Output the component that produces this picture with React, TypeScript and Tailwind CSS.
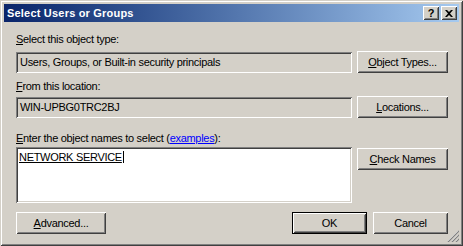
import type { ReactNode } from 'react'

const raised =
  'shadow-[inset_1px_1px_#ffffff,inset_-1px_-1px_#404040,inset_2px_2px_#d4d0c8,inset_-2px_-2px_#808080]'
const sunken =
  'shadow-[inset_1px_1px_#808080,inset_-1px_-1px_#ffffff,inset_2px_2px_#404040,inset_-2px_-2px_#d4d0c8]'

function Btn({
  children,
  className = '',
  isDefault = false,
}: {
  children: ReactNode
  className?: string
  isDefault?: boolean
}) {
  if (isDefault) {
    return (
      <div className={`h-[22px] border border-black ${className}`}>
        <div className={`flex h-full items-center justify-center bg-[#d4d0c8] ${raised}`}>
          {children}
        </div>
      </div>
    )
  }
  return (
    <div className={`flex h-[22px] items-center justify-center bg-[#d4d0c8] ${raised} ${className}`}>
      {children}
    </div>
  )
}

function U({ children }: { children: ReactNode }) {
  return <span className="underline underline-offset-[1px]">{children}</span>
}

export default function App() {
  return (
    <div
      className="relative flex h-[246px] w-[463px] flex-col bg-[#d4d0c8] p-[4px] text-[11px] leading-[14px] text-black shadow-[inset_1px_1px_#d4d0c8,inset_-1px_-1px_#404040,inset_2px_2px_#ffffff,inset_-2px_-2px_#808080]"
      style={{ fontFamily: '"Liberation Sans", Arial, sans-serif' }}
    >
      {/* Title bar */}
      <div className="flex h-[18px] items-center bg-gradient-to-r from-[#0a246a] to-[#a6caf0] pl-[3px] pr-[2px]">
        <span className="flex-1 text-[11px] font-bold tracking-[0.2px] text-white">Select Users or Groups</span>
        <div className={`flex h-[14px] w-[16px] items-center justify-center bg-[#d4d0c8] text-[11px] font-bold ${raised}`}>
          ?
        </div>
        <div className={`ml-[2px] flex h-[14px] w-[16px] items-center justify-center bg-[#d4d0c8] ${raised}`}>
          <svg width="8" height="7" viewBox="0 0 8 7">
            <path d="M0 0h2l2 2 2-2h2L5 3.5 8 7H6L4 5 2 7H0l3-3.5z" fill="#000" />
          </svg>
        </div>
      </div>

      {/* Body */}
      <div className="flex flex-1 flex-col pl-[12px] pr-[11px] pt-[10px] tracking-[-0.3px]">
        <div>
          <U>S</U>elect this object type:
        </div>
        <div className="mt-[5px] flex items-center gap-[5px]">
          <div className={`flex h-[21px] flex-1 items-center pl-[4px] ${sunken}`}>
            Users, Groups, or Built-in security principals
          </div>
          <Btn className="w-[91px]">
            <span>
              <U>O</U>bject Types...
            </span>
          </Btn>
        </div>

        <div className="mt-[6px]">
          <U>F</U>rom this location:
        </div>
        <div className="mt-[3px] flex items-center gap-[5px]">
          <div className={`flex h-[21px] flex-1 items-center pl-[4px] ${sunken}`}>WIN-UPBG0TRC2BJ</div>
          <Btn className="w-[91px]">
            <span>
              <U>L</U>ocations...
            </span>
          </Btn>
        </div>

        <div className="mt-[13px]">
          <U>E</U>nter the object names to select (
          <span className="text-[#0000ff] underline underline-offset-[1px]">examples</span>):
        </div>
        <div className="mt-[2px] flex items-start gap-[5px]">
          <div className={`h-[56px] flex-1 bg-white pl-[3px] pt-[3px] ${sunken}`}>
            <span className="border-r border-black pr-[1px] underline underline-offset-[1px]">NETWORK SERVICE</span>
          </div>
          <Btn className="mt-[1px] w-[91px]">
            <span>
              <U>C</U>heck Names
            </span>
          </Btn>
        </div>

        <div className="mt-[9px] flex items-center">
          <Btn className="w-[90px]">
            <span>
              <U>A</U>dvanced...
            </span>
          </Btn>
          <div className="flex-1" />
          <Btn isDefault className="w-[75px]">
            OK
          </Btn>
          <Btn className="ml-[6px] w-[75px]">Cancel</Btn>
        </div>
      </div>

      {/* Size grip */}
      <svg className="absolute bottom-[4px] right-[4px]" width="12" height="12" viewBox="0 0 12 12">
        <path d="M11 1L1 11M11 5L5 11M11 9L9 11" stroke="#ffffff" strokeWidth="1" />
        <path d="M12 1L1 12M12 5L5 12M12 9L9 12" stroke="#808080" strokeWidth="1.2" />
      </svg>
    </div>
  )
}
